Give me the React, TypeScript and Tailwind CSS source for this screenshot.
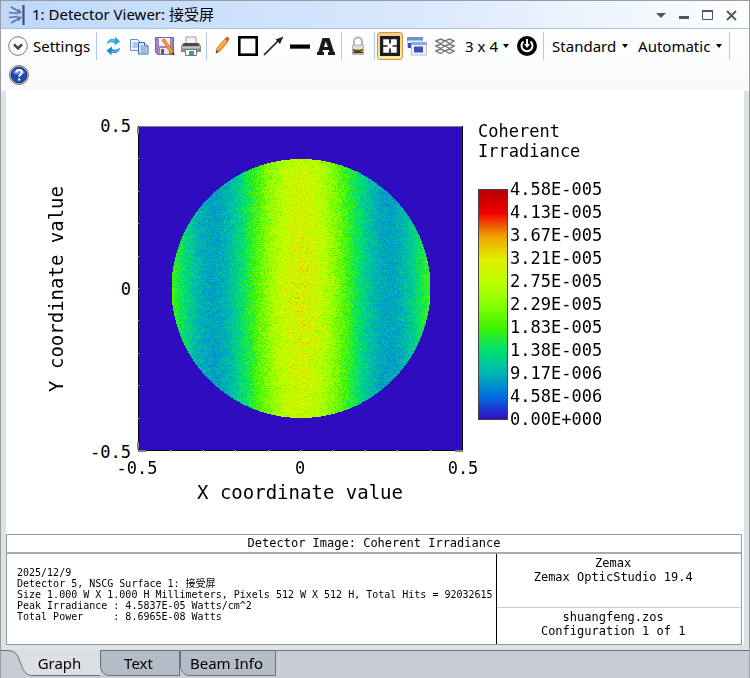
import React, { useLayoutEffect, useRef, useState } from 'react';

const LEGEND = [
  '4.58E-005',
  '4.13E-005',
  '3.67E-005',
  '3.21E-005',
  '2.75E-005',
  '2.29E-005',
  '1.83E-005',
  '1.38E-005',
  '9.17E-006',
  '4.58E-006',
  '0.00E+000',
];

// False colour scale, low to high
const STOPS = [
  [48, 12, 192],
  [0, 112, 224],
  [0, 180, 180],
  [0, 226, 112],
  [64, 244, 0],
  [136, 255, 0],
  [190, 255, 0],
  [226, 238, 0],
  [240, 160, 0],
  [240, 0, 0],
  [184, 0, 0],
];

const DETAILS = `2025/12/9
Detector 5, NSCG Surface 1: 接受屏
Size 1.000 W X 1.000 H Millimeters, Pixels 512 W X 512 H, Total Hits = 92032615
Peak Irradiance : 4.5837E-05 Watts/cm^2
Total Power     : 8.6965E-08 Watts`;

const PLOT = 326;

const colorAt = (value: number) => {
  const t = Math.min(0.999, Math.max(0, value)) * 10;
  const i = Math.floor(t);
  return STOPS[i].map((c, k) => c + (STOPS[i + 1][k] - c) * (t - i));
};

const createRandom = (seed: number) => () => {
  seed = (seed * 1664525 + 1013904223) >>> 0;
  return seed / 4294967296;
};

const DetectorPlot: React.FC = () => {
  const ref = useRef<HTMLCanvasElement>(null);

  useLayoutEffect(() => {
    const ctx = ref.current?.getContext('2d');
    if (!ctx) return;
    const image = ctx.createImageData(PLOT, PLOT);
    const random = createRandom(7);

    for (let y = 0; y < PLOT; y++) {
      for (let x = 0; x < PLOT; x++) {
        const dx = x - 163.5;
        const dy = y - 162;
        let value = 0;
        if (dx * dx + dy * dy < 129.5 * 129.5) {
          const fringe = 0.415 + 0.24 * Math.cos((Math.PI * dx) / 88);
          const mean = fringe * (1.02 - 0.08 * (dy / 130) ** 2);
          const noise = random() + random() + random() + random() - 2;
          value = mean + noise * 0.12 * Math.sqrt(mean);
        }
        image.data.set([...colorAt(value), 255], (y * PLOT + x) * 4);
      }
    }
    ctx.putImageData(image, 0, 0);

    // Axes
    ctx.fillStyle = '#808090';
    ctx.fillRect(1, 0, PLOT, 1);
    ctx.fillStyle = '#ffffff';
    ctx.fillRect(0, 0, 1, PLOT);
    ctx.fillRect(0, PLOT - 1, PLOT, 1);
    ctx.fillStyle = '#000000';
    ctx.fillRect(1, 0, 1, PLOT - 1);
    ctx.fillRect(1, PLOT - 2, PLOT, 1);
    ctx.fillRect(PLOT - 1, 0, 1, PLOT - 1);
    ctx.fillStyle = '#c8c8c8';
    for (let i = 1; i < 10; i++) {
      const at = Math.round(i * 32.4);
      ctx.fillRect(0, at, 2, 1);
      ctx.fillRect(at + 1, PLOT - 2, 1, 2);
    }
    ctx.fillStyle = '#808080';
    ctx.fillRect(0, 1, 2, 7);
    ctx.fillRect(0, PLOT - 10, 2, 7);
    ctx.fillRect(1, PLOT - 2, 8, 2);
    ctx.fillRect(PLOT - 8, PLOT - 2, 8, 2);
  }, []);

  return (
    <canvas
      ref={ref}
      width={PLOT}
      height={PLOT}
      role="img"
      aria-label="Coherent irradiance on the detector"
      className="my-2 block"
    />
  );
};

const Caret = () => (
  <svg width="6" height="4" viewBox="0 0 6 4" className="pointer-events-none shrink-0">
    <path d="M0 0h6L3 4z" fill="#000" />
  </svg>
);

const Separator = () => <div className="mx-[7px] h-7 w-px bg-[#b4cae4]" />;

type ToolProps = { label: string; children: React.ReactNode; active?: boolean };

const Tool: React.FC<ToolProps> = ({ label, children, active }) => (
  <button
    type="button"
    aria-label={label}
    aria-pressed={active}
    className={
      active
        ? 'flex h-7 w-[26px] items-center justify-center rounded-[3px] border border-[#c29b48] bg-gradient-to-b from-[#f6c987] to-[#ffe9a0]'
        : 'flex h-7 w-[26px] items-center justify-center'
    }
  >
    <svg width="22" height="22" viewBox="0 0 22 22" className="shrink-0">
      {children}
    </svg>
  </button>
);

const Dropdown: React.FC<{ label: string; value: string }> = ({ label, value }) => (
  <label className="flex items-center gap-[5px]">
    <select aria-label={label} defaultValue={value} className="appearance-none bg-transparent">
      <option>{value}</option>
    </select>
    <Caret />
  </label>
);

const Toolbar = () => (
  <div className="flex flex-wrap items-center gap-y-px pt-[3px] pb-[2px] pl-[7px] text-[15px] leading-7 text-black">
    <button type="button" className="flex items-center gap-[5px]">
      <svg width="20" height="20" viewBox="0 0 20 20">
        <circle cx="10" cy="10" r="9.3" fill="#fff" stroke="#777" />
        <path d="M6 8.300l4 4 4-4" fill="none" stroke="#444" strokeWidth="2.600" />
      </svg>
      Settings
    </button>
    <div className="-ml-px"><Separator /></div>
    <div className="-ml-1 flex">
      <Tool label="Update">
        <path d="M5 9.500C5 5 9 3 13 4.500V1.500l5 5-5.500 4V8C9.500 6.500 7 7.500 5 9.500z" fill="#2ba4dc" />
        <path d="M18 12.500c0 4.500-4.500 6.500-8.500 5V20.500l-5-5 5.500-4V14c3 1.500 6 .5 8-1.500z" fill="#1b8cc9" />
        <path d="M6 7.500c2-2 4.500-2.500 7-1.500M17 14.500c-2 2-4.500 2.500-7 1.500" fill="none" stroke="#74cdf0" />
      </Tool>
      <Tool label="Copy">
        <path d="M2.500 4.500h7l3 3v8h-10z" fill="#eef6ff" stroke="#6e8db8" />
        <path d="M4.500 8h5M4.500 10h6M4.500 12h6" stroke="#69a2dc" />
        <path d="M10.500 7.500h6l3.500 3.500v8h-9.500z" fill="#dcecff" stroke="#3d62a4" />
        <path d="M16.500 7.500V11H20" fill="#fff" stroke="#3d62a4" />
        <path d="M12.500 11h3M12.500 13h6M12.500 15h6M12.500 17h6" stroke="#4b8cd4" />
      </Tool>
      <Tool label="Save">
        <path d="M1.500 2.500h18v17h-16l-2-2z" fill="#a584bd" stroke="#8064a0" />
        <path d="M5 3h11v8H5z" fill="#f5effa" />
        <path d="M6 13h9v6H6z" fill="#e8e5ef" />
        <path d="M7 14h3v5H7z" fill="#655078" />
        <path d="M8 5l2.500-1 8.500 12 1 4-3.500-2z" fill="#f4a12a" stroke="#b46216" strokeWidth=".7" />
        <path d="M17.500 18.500l3 2-.8-3.500z" fill="#332" />
      </Tool>
      <Tool label="Print">
        <path d="M6 2h10v7H6z" fill="#f5f5f5" stroke="#999" />
        <path d="M3 8h16l2 3v6H1v-6z" fill="#888" />
        <path d="M4 8h14l1 3H3z" fill="#4b4b4b" />
        <path d="M2 12.500h18" stroke="#c7c7c7" strokeWidth="2" />
        <path d="M5.500 14.500h11v6h-11z" fill="#fff" stroke="#777" />
        <path d="M9 16h5v4H9z" fill="#2b9bb8" />
      </Tool>
    </div>
    <div className="ml-[-5px]"><Separator /></div>
    <div className="ml-[-5px] flex">
      <Tool label="Draw">
        <path d="M5 18l1-5 8-9 3 2.500-8 9.500z" fill="#f5a11d" stroke="#b86d1b" strokeWidth=".8" />
        <path d="M7 14L15 5" stroke="#ffd477" />
        <path d="M14 3.500l1.500-1.500 3 1-1.500 3.500z" fill="#df3c3c" />
        <path d="M5 18l.5-2.500L7.500 17z" fill="#333" />
      </Tool>
      <Tool label="Rectangle">
        <rect x="2.300" y="2.300" width="17.400" height="17.400" fill="#fff" stroke="#000" strokeWidth="2.600" />
      </Tool>
      <Tool label="Arrow">
        <path d="M1 20L16 5" stroke="#222" strokeWidth="1.700" />
        <path d="M20.500 1.500l-3.500 7.500-4.500-4.500z" fill="#222" />
      </Tool>
      <Tool label="Line">
        <path d="M1 11.500h20" stroke="#000" strokeWidth="4" />
        <path d="M1 13.500h20" stroke="#555" />
      </Tool>
      <Tool label="Annotation">
        <path
          d="M7.500 3h7l4.500 14h1v3h-7v-3h1.500l-.7-2H8l-.6 2H9v3H2v-3h1.200zM10.800 6.500L8.900 12h4z"
          fill="#1a1a1a"
          fillRule="evenodd"
        />
      </Tool>
    </div>
    <div className="ml-[-5px]"><Separator /></div>
    <div className="ml-[-4px]">
      <Tool label="Lock window">
        <path d="M7 12V6.500a4 4 0 0 1 8 0V12" fill="none" stroke="#b4b4b4" strokeWidth="2" />
        <path d="M5.500 10h11v9.500h-11z" fill="#dcdcdc" stroke="#b4b4b4" />
        <path d="M6 14h10v4H6z" fill="#d9bd45" />
        <path d="M6 14.500l3 1.500h3l4-1.500M6 17.500h10" stroke="#3d3820" strokeWidth="1.300" fill="none" />
      </Tool>
    </div>
    <div className="-ml-1"><Separator /></div>
    <div className="ml-[-5px] flex">
      <Tool label="Keep aspect" active>
        <path d="M1 1h20v20H1z" fill="#1c1c1c" />
        <path d="M3.500 3.500h15v15h-15z" fill="#fff" />
        <path d="M3.500 3.500h15v15h-15z" fill="none" stroke="#1c1c1c" strokeWidth="1.500" />
        <path d="M11 4v4.500M11 13.500V18M4 11h4.500M13.500 11H18" stroke="#1c1c1c" strokeWidth="1.700" />
      </Tool>
      <div className="ml-px">
        <Tool label="Clone window">
          <path d="M1.500 2.500h15v9h-15z" fill="#e9effa" stroke="#b7c7e0" />
          <path d="M1 2h16v3.500H1z" fill="#6a92cf" />
          <path d="M2 8h4v5H2z" fill="#3c50b8" />
          <path d="M5.500 7.500h15v12.500h-15z" fill="#f1f3f7" stroke="#b7bdc9" />
          <path d="M5 7h16v3H5z" fill="#8aabdc" />
          <path d="M8 11.500h9v6H8z" fill="#3c50b8" />
        </Tool>
      </div>
      <div className="ml-[2px] flex">
        <Tool label="Overlay">
          <g fill="none" stroke="#777" strokeWidth="1.400">
            <path d="M2 6l4.500-2L11 6l4.500-2L20 6l-4.500 2.500L11 6 6.500 8.500z" />
            <path d="M2 11l4.500-2 4.500 2 4.500-2 4.500 2-4.500 2.500L11 11l-4.500 2.500z" />
            <path d="M2 16l4.500-2 4.500 2 4.500-2 4.500 2-4.500 2.500L11 16l-4.500 2.500z" />
          </g>
        </Tool>
      </div>
    </div>
    <div className="ml-[7px]">
      <Dropdown label="Grid" value="3 x 4" />
    </div>
    <div className="ml-[5px]">
      <Tool label="Reset">
        <circle cx="11" cy="11" r="10" fill="#000" />
        <path d="M7.500 6.500a5.500 5.500 0 1 0 7 0" fill="none" stroke="#fff" strokeWidth="2" />
        <path d="M11 4v6" stroke="#fff" strokeWidth="2" />
        <path d="M8 9h6l-3 4z" fill="#fff" />
      </Tool>
    </div>
    <div className="ml-[-4px]"><Separator /></div>
    <div className="ml-px flex gap-[10px]">
      <Dropdown label="Mode" value="Standard" />
      <Dropdown label="Resolution" value="Automatic" />
    </div>
    <Separator />
    <div className="ml-[-2px]">
      <Tool label="Help">
        <circle cx="11" cy="11" r="9.500" fill="#c4c4c4" stroke="#777" />
        <circle cx="11" cy="11" r="7.800" fill="#2447b0" stroke="#183080" />
        <path d="M5 9a6.500 6.500 0 0 1 12 0c-3 2-9 2-12 0z" fill="#668be0" />
        <path d="M8.300 8.500c.3-3.500 5.800-3.300 5.600 0-.2 2-2.700 2-2.700 4.300" fill="none" stroke="#fff" strokeWidth="2" />
        <circle cx="11.200" cy="15.500" r="1.200" fill="#fff" />
      </Tool>
    </div>
  </div>
);

const TitleBar = () => (
  <header className="flex h-7 items-center border-b border-[#a9c3e0] bg-gradient-to-r from-[#bed8fb] via-[#d6e6fd] to-[#fdfeff] pr-3 pl-[7px]">
    <svg width="18" height="20" viewBox="0 0 18 20">
      <path d="M15.500 0v20" stroke="#465068" strokeWidth="2.200" />
      <path d="M3 2l8 4.500M1 7.500l9 1M1 12.500l9-1M3 18l8-4.500" stroke="#5a72b4" strokeWidth="1.600" />
      <path d="M11 3.500l3 5-5-.5zM11 16.500l3-5-5 .5z" fill="#5a72b4" />
    </svg>
    <h1 className="ml-[6px] text-[15px] text-black">1: Detector Viewer: 接受屏</h1>
    <div className="ml-auto flex items-center gap-[13px] text-[#555]">
      <button type="button" aria-label="Window menu">
        <svg width="10" height="12" viewBox="0 0 10 12" className="block">
          <path d="M0 4h10L5 9z" fill="currentColor" />
        </svg>
      </button>
      <button type="button" aria-label="Minimize">
        <svg width="10" height="12" viewBox="0 0 10 12" className="block">
          <path d="M0 7h10v3H0z" fill="currentColor" />
        </svg>
      </button>
      <button type="button" aria-label="Maximize">
        <svg width="11" height="12" viewBox="0 0 11 12" className="block">
          <path d="M.5 2.500h10v8H.5z" fill="none" stroke="currentColor" />
          <path d="M0 1h11v2H0z" fill="currentColor" />
        </svg>
      </button>
      <button type="button" aria-label="Close">
        <svg width="11" height="12" viewBox="0 0 11 12" className="block">
          <path d="M1 2l9 9M10 2l-9 9" stroke="currentColor" strokeWidth="1.800" />
        </svg>
      </button>
    </div>
  </header>
);

const Chart = () => (
  <div className="flex grow items-start pt-[27px] pl-[38px] font-['DejaVu_Sans_Mono',monospace] text-[17px] leading-4 text-black">
    <div className="grid grid-cols-[24px_69px_auto]">
      <div className="flex items-center justify-center">
        <span className="rotate-180 text-[19px] leading-6 whitespace-nowrap [writing-mode:vertical-rl]">Y coordinate value</span>
      </div>
      <div className="flex flex-col justify-between pr-[6px] text-right">
        <span>0.5</span>
        <span>0</span>
        <span>-0.5</span>
      </div>
      <DetectorPlot />
      <div className="col-start-3 mx-[-22px] flex justify-between text-center">
        <span className="w-11">-0.5</span>
        <span className="w-11">0</span>
        <span className="w-11">0.5</span>
      </div>
      <div className="col-start-3 pt-1 text-center text-[19px] leading-6">X coordinate value</div>
    </div>
    <div className="ml-[15px] pt-[3px]">
      <div className="leading-5">
        Coherent
        <br />
        Irradiance
      </div>
      <div className="mt-[17px] flex items-start gap-[2px]">
        <div className="mt-[11px] h-[231px] w-[30px] border border-[#444] bg-[linear-gradient(to_bottom,#b80000,#f00000,#f0a000,#e2ee00,#beff00,#88ff00,#40f400,#00e270,#00b4b4,#0070e0,#300cc0)]" />
        <ul className="leading-[23px]">
          {LEGEND.map((value) => (
            <li key={value}>{value}</li>
          ))}
        </ul>
      </div>
    </div>
  </div>
);

const InfoPanel = () => (
  <div className="mr-[2px] border border-[#999] font-['DejaVu_Sans_Mono','Noto_Sans_CJK_SC',monospace] text-xs text-black">
    <h2 className="border-b-2 border-[#aaa] text-center leading-[17px]">Detector Image: Coherent Irradiance</h2>
    <div className="grid grid-cols-[2fr_1fr]">
      <pre className="pt-[13px] pl-[10px] font-['DejaVu_Sans_Mono','Noto_Sans_CJK_SC',monospace] text-[10px] leading-[11px]">
        {DETAILS}
      </pre>
      <div className="border-l border-black text-center leading-[14px]">
        <div className="h-[54px] border-b border-[#ccc] pt-[2px] pr-3">
          Zemax
          <br />
          Zemax OpticStudio 19.4
        </div>
        <div className="h-9 pt-[2px] pr-3">
          shuangfeng.zos
          <br />
          Configuration 1 of 1
        </div>
      </div>
    </div>
  </div>
);

const TABS = [
  {
    name: 'Graph',
    size: 'w-[99px] pl-[18px]',
    viewBox: '0 0 99 26',
    fill: '#dcdfe3',
    shape: 'M4 0C18 0 18 8 20 14 23 23 26 25.500 32 25.500H99V0',
    line: 'M0 .5H5C17 0 17 8 20 14 23 23 26 25.500 32 25.500H99',
  },
  {
    name: 'Text',
    size: 'w-20 pr-[3px]',
    viewBox: '0 0 80 26',
    fill: '#b4bcc7',
    shape: 'M.5 .5V17C2 23 5 25.500 10 25.500H79.500V.5z',
    line: 'M.5 .5V17C2 23 5 25.500 10 25.500H79.500V.5z',
  },
  {
    name: 'Beam Info',
    size: 'w-24 pr-[3px]',
    viewBox: '0 0 96 26',
    fill: '#b4bcc7',
    shape: 'M.5 .5V17C2 23 5 25.500 10 25.500H95.500V.5z',
    line: 'M.5 .5V17C2 23 5 25.500 10 25.500H95.500V.5z',
  },
];

const TabBar = () => {
  const [current, setCurrent] = useState('Graph');

  return (
    <div role="tablist" className="flex h-7 bg-[#c9cdd3] text-[15px] text-black">
      {TABS.map((tab) => (
        <button
          key={tab.name}
          type="button"
          role="tab"
          aria-selected={tab.name === current}
          onClick={() => setCurrent(tab.name)}
          className={`relative h-[26px] ${tab.size}`}
        >
          <svg viewBox={tab.viewBox} className="absolute inset-0 h-full w-full">
            <path d={tab.shape} fill={tab.fill} />
            <path d={tab.line} fill="none" stroke="#667084" />
          </svg>
          <span className="relative">{tab.name}</span>
        </button>
      ))}
      <div className="grow border-t border-[#667084]" />
    </div>
  );
};

const App: React.FC = () => (
  <div className="flex min-h-screen flex-col border border-b-0 border-[#999ca2] bg-[#dfe2e5] font-['Noto_Sans','Noto_Sans_CJK_SC',sans-serif]">
    <TitleBar />
    <div className="bg-gradient-to-b from-[#fefefe] to-[#f8fafa]">
      <Toolbar />
    </div>
    <main className="mx-[5px] mb-[5px] flex grow flex-col bg-white">
      <Chart />
      <InfoPanel />
    </main>
    <TabBar />
  </div>
);

export default App;
